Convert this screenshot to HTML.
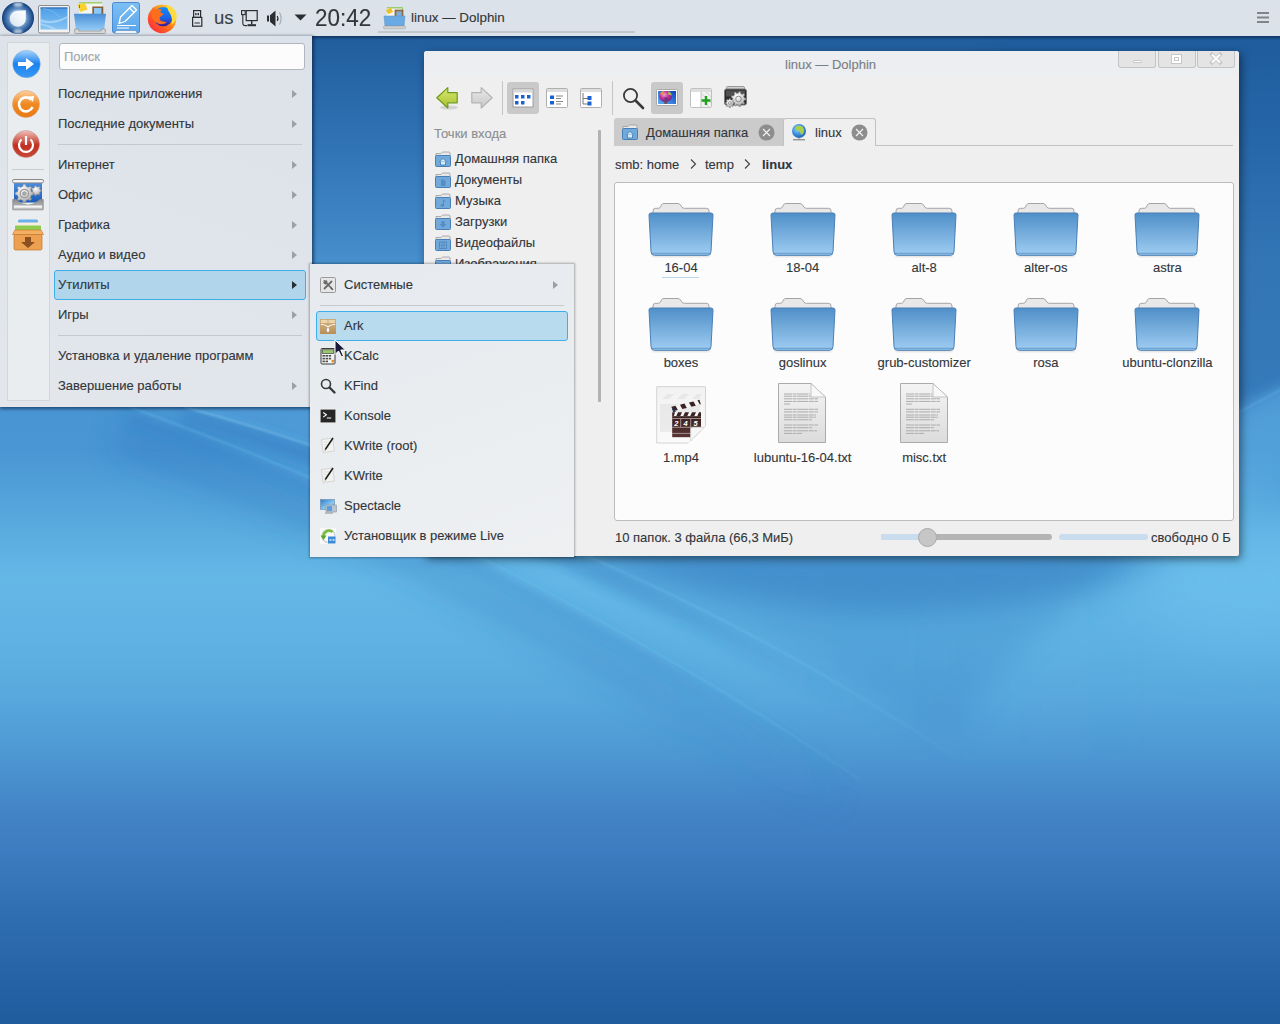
<!DOCTYPE html>
<html><head><meta charset="utf-8">
<style>
*{box-sizing:border-box;margin:0;padding:0}
html,body{width:1280px;height:1024px;overflow:hidden}
body{position:relative;font-family:"Liberation Sans",sans-serif;font-size:13px;color:#31363b;background:#2a6aab}
.a{position:absolute}
.t{position:absolute;white-space:nowrap;line-height:16px;-webkit-text-stroke:.12px currentColor}
.arr{position:absolute;width:0;height:0;border-top:4px solid transparent;border-bottom:4px solid transparent;border-left:5px solid #9aa0a6}
.sep{position:absolute;height:1px;background:#c3c8cd}
.hl{position:absolute;background:#b3d7ec;border:1px solid #3daee9;border-radius:3px}
svg.a{overflow:visible}
.lbl{position:absolute;width:120px;text-align:center;white-space:nowrap;line-height:16px;-webkit-text-stroke:.12px currentColor}
</style></head><body>
<svg width="0" height="0" style="position:absolute">
<defs>
<linearGradient id="fg" x1="0" y1="0" x2="0" y2="1">
<stop offset="0" stop-color="#4f8fc8"/><stop offset="1" stop-color="#9fcdf2"/>
</linearGradient>
<linearGradient id="pg" x1="0" y1="0" x2="0" y2="1">
<stop offset="0" stop-color="#f4f4f4"/><stop offset="1" stop-color="#dcdcdc"/>
</linearGradient>
<g id="folder">
<path d="M4 14 V7.8 Q4 5.3 6.5 5.3 H9.5 Q11 5.3 12 3 L12.5 1.8 Q13.2 0.5 15 0.5 H29 Q30.5 0.5 31.5 2 L33 4.2 Q33.8 5.3 35.5 5.3 H57.5 Q60 5.3 60 7.8 V14 Z" fill="#e8e8e8" stroke="#a4a4a4" stroke-width="1"/>
<rect x="3" y="50" width="58" height="4" rx="2" fill="#000" opacity=".12" filter="url(#bl1)"/>
<path d="M2 10 H62 Q64 10 64 12 L62 48.5 Q62 52.3 58.5 52.3 H5.5 Q2 52.3 2 48.5 L0 12 Q0 10 2 10 Z" fill="url(#fg)" stroke="#4a7fb5" stroke-width="1"/>
<path d="M3 50.5 H61" stroke="#6ea3d4" stroke-width="1.5"/>
</g>
<g id="txt">
<path d="M0.5 0.5 H33 L47.5 14 V59.5 H0.5 Z" fill="url(#pg)" stroke="#ababab"/>
<g stroke="#acacac" stroke-width="1" stroke-dasharray="8 .6 4 .6 11 .6 5 .6">
<path d="M6 11H32M6 13.2H34M6 15.8H40M6 18.4H40M6 21H12"/>
<path d="M6 26.3H40M6 28.9H40M6 32H38M6 34.2H38M6 36.8H34"/>
<path d="M6 42H40M6 44.7H34M6 47.8H39M6 50.4H24"/>
</g>
<path d="M33 0.5 V14 H47.5 Z" fill="#f8f8f8" stroke="#c4c4c4"/>
</g>
<g id="mp4">
<defs><linearGradient id="mpg" x1="0" y1="0" x2="0" y2="1"><stop offset="0" stop-color="#f2f2f2"/><stop offset="1" stop-color="#fafafa"/></linearGradient>
<linearGradient id="brd" x1="0" y1="0" x2="0" y2="1"><stop offset="0" stop-color="#3a2020"/><stop offset="1" stop-color="#5a3434"/></linearGradient></defs>
<path d="M0.7 0.7 H49.5 V40 L32.5 57 H0.7 Z" fill="url(#mpg)" stroke="#d4d4d4" stroke-width="1"/>
<g opacity=".07" fill="#555"><path d="M6 13L11 8H18L13 13ZM21 13L26 8H33L28 13ZM36 13L41 8H46L43 13Z"/><rect x="4" y="18" width="40" height="28"/></g>
<path d="M15.5 20.8 L43.5 13.8 L44.8 18.2 L16.6 25.4 Z" fill="#f4f4f4"/>
<path d="M15.5 20.8L19.5 19.8L21.8 24.1L17.3 25.2ZM24 18.7L28.5 17.6L30.8 21.9L26.3 23ZM33 16.5L37.5 15.4L39.8 19.7L35.3 20.8ZM41.5 14.3L43.5 13.8L44.8 18.2L43.8 18.4Z" fill="#3a2222"/>
<path d="M15.5 20.8 L17 26 L20 26" fill="#2a3a5a"/>
<rect x="16.2" y="26.2" width="28.8" height="4" fill="#f4f4f4"/>
<path d="M16.2 26.2H19L17.8 30.2H16.2ZM22 26.2H26L24.2 30.2H20.2ZM29 26.2H33L31.2 30.2H27.2ZM36 26.2H40L38.2 30.2H34.2ZM43 26.2H45V30.2H41.2Z" fill="#3a2222"/>
<rect x="16.2" y="30.2" width="28.8" height="21" fill="url(#brd)"/>
<path d="M16.2 32.5H45M16.2 41.3H45M16.2 47.4H45M24.7 32.5V41.3M34.7 32.5V51.3" stroke="#b8a8a8" stroke-width=".8"/>
<text x="18.2" y="39.8" font-size="7.5" fill="#fff" font-family="Liberation Sans" font-weight="bold" font-style="italic">2</text>
<text x="27.6" y="39.8" font-size="7.5" fill="#fff" font-family="Liberation Sans" font-weight="bold" font-style="italic">4</text>
<text x="37.6" y="39.8" font-size="7.5" fill="#fff" font-family="Liberation Sans" font-weight="bold" font-style="italic">5</text>
<path d="M49.8 39.7 L32.2 57.3 H50 Z" fill="#fcfcfc"/><path d="M34.7 55 V43.3 Q34.7 41.3 36.7 41.3 H48.4 Z" fill="#f6f6f6" stroke="#d0d0d0" stroke-width=".7"/>
</g>
<g id="hfold">
<path d="M1 2.5 H6 L7.5 1 H14 Q15 1 15 2 V5 H1 Z" fill="#e8e8e8" stroke="#9a9a9a" stroke-width=".8"/>
<rect x="0.5" y="4.5" width="15" height="11" rx="1" fill="#72a9db" stroke="#4a7fb5"/>
</g>
</defs>
</svg>

<!-- WALLPAPER -->
<svg id="wall" class="a" style="left:0;top:0" width="1280" height="1024">
<defs>
<linearGradient id="wg" gradientUnits="userSpaceOnUse" x1="0" y1="0" x2="0" y2="1024">
<stop offset="0" stop-color="#1c5696"/>
<stop offset="0.039" stop-color="#215e9e"/>
<stop offset="0.146" stop-color="#3174b6"/>
<stop offset="0.254" stop-color="#468ecc"/>
<stop offset="0.44" stop-color="#4a96d4"/>
<stop offset="0.566" stop-color="#64b8e6"/>
<stop offset="0.635" stop-color="#5eb0e2"/>
<stop offset="0.684" stop-color="#58a7dd"/>
<stop offset="0.742" stop-color="#4c96d2"/>
<stop offset="0.791" stop-color="#4384c6"/>
<stop offset="0.85" stop-color="#3a78bc"/>
<stop offset="0.898" stop-color="#2f6db1"/>
<stop offset="0.947" stop-color="#2764a7"/>
<stop offset="1" stop-color="#1f5c9e"/>
</linearGradient>
<linearGradient id="fadeR" gradientUnits="userSpaceOnUse" x1="100" y1="0" x2="980" y2="0">
<stop offset="0" stop-color="#8ad0f6" stop-opacity=".7"/>
<stop offset=".7" stop-color="#8ad0f6" stop-opacity=".5"/>
<stop offset="1" stop-color="#8ad0f6" stop-opacity="0"/>
</linearGradient>
<linearGradient id="fadeR2" gradientUnits="userSpaceOnUse" x1="100" y1="0" x2="900" y2="0">
<stop offset="0" stop-color="#62b2e6" stop-opacity=".5"/>
<stop offset=".7" stop-color="#62b2e6" stop-opacity=".35"/>
<stop offset="1" stop-color="#62b2e6" stop-opacity="0"/>
</linearGradient>
<linearGradient id="fadeD" gradientUnits="userSpaceOnUse" x1="100" y1="0" x2="860" y2="0">
<stop offset="0" stop-color="#2a72ba" stop-opacity=".4"/>
<stop offset=".7" stop-color="#2a72ba" stop-opacity=".3"/>
<stop offset="1" stop-color="#3580c4" stop-opacity="0"/>
</linearGradient>
<linearGradient id="fadeL" gradientUnits="userSpaceOnUse" x1="0" y1="0" x2="1280" y2="0">
<stop offset="0" stop-color="#62b2e6" stop-opacity=".22"/>
<stop offset=".5" stop-color="#62b2e6" stop-opacity=".12"/>
<stop offset=".9" stop-color="#62b2e6" stop-opacity="0"/>
</linearGradient>
<linearGradient id="fadeDk" gradientUnits="userSpaceOnUse" x1="0" y1="0" x2="1280" y2="0">
<stop offset="0" stop-color="#2f78c0" stop-opacity=".3"/>
<stop offset=".72" stop-color="#2f78c0" stop-opacity=".3"/>
<stop offset=".95" stop-color="#2f78c0" stop-opacity="0"/>
</linearGradient>
<filter id="bl8" x="-20%" y="-20%" width="140%" height="140%"><feGaussianBlur stdDeviation="6"/></filter>
<filter id="bl30" x="-50%" y="-50%" width="200%" height="200%"><feGaussianBlur stdDeviation="30"/></filter>
<filter id="bl15" x="-50%" y="-50%" width="200%" height="200%"><feGaussianBlur stdDeviation="15"/></filter>
<filter id="bl1"><feGaussianBlur stdDeviation="0.8"/></filter>
</defs>
<rect width="1280" height="1024" fill="url(#wg)"/>
<!-- lighter region top-right of upper line -->
<path d="M185 407 Q380 460 590 557 Q780 640 960 760 L1300 760 L1300 300 L185 300 Z" fill="url(#fadeL)" filter="url(#bl8)"/>
<!-- soft shadows below streak lines -->
<path d="M118 436 Q318 509 468 586 Q688 699 848 809" stroke="url(#fadeD)" stroke-width="40" fill="none" opacity=".8" filter="url(#bl15)"/>
<path d="M127 417 Q327 490 477 567 Q697 680 857 790" stroke="url(#fadeD)" stroke-width="10" fill="none" opacity=".7" filter="url(#bl8)"/>
<path d="M181 418 Q376 471 586 568 Q776 651 956 771" stroke="url(#fadeD)" stroke-width="18" fill="none" filter="url(#bl8)"/>
<!-- light edges -->
<path d="M187 404 Q382 457 592 554 Q782 637 962 757" stroke="url(#fadeR2)" stroke-width="4" fill="none" opacity=".5" filter="url(#bl1)"/>
<path d="M134 401 Q334 474 484 551 Q704 664 864 774" stroke="url(#fadeR2)" stroke-width="10" fill="none" opacity=".35" filter="url(#bl8)"/>
<path d="M185 407 Q380 460 590 557 Q780 640 960 760" stroke="url(#fadeR)" stroke-width="1.5" fill="none" filter="url(#bl1)"/>
<path d="M130 407 Q330 480 480 557 Q700 670 860 780" stroke="url(#fadeR)" stroke-width="1.5" fill="none" opacity=".55" filter="url(#bl1)"/>
<!-- dark wedge right of upper streak below dolphin -->
<path d="M588 557 Q780 640 950 740 Q1000 650 1160 540 L588 540 Z" fill="#2f74bc" opacity=".22" filter="url(#bl15)"/>
<!-- dark smile under dolphin -->
<path d="M586 548 Q640 590 860 612 Q1060 612 1180 556 L1180 548 Z" fill="#2f74bc" opacity=".5" filter="url(#bl15)"/>
<!-- right side dark above rising curve -->
<path d="M1000 36 L1300 36 L1300 378 Q1240 402 1150 462 Q1080 510 1000 530 L800 300 Z" fill="#1f5a9c" opacity=".45" filter="url(#bl8)"/>
<path d="M1130 486 Q1220 426 1300 388 L1300 470 Q1200 520 1130 560Z" fill="#6cc0ec" opacity=".25" filter="url(#bl15)"/>
<path d="M1130 480 Q1220 420 1300 380" stroke="#7cc4f0" stroke-width="1.5" fill="none" opacity=".32" filter="url(#bl1)"/>
<!-- bright right glow -->
<ellipse cx="1250" cy="580" rx="110" ry="60" fill="#6cc0ec" opacity=".75" filter="url(#bl30)"/>
</svg>



<!-- DOLPHIN -->
<div class="a" style="left:424px;top:51px;width:815px;height:505px;background:#efeff0;border-radius:3px 3px 2px 2px;box-shadow:2px 3px 8px rgba(0,0,0,.5)"></div>
<div class="a" style="left:424px;top:51px;width:815px;height:26px;background:linear-gradient(#eceef1,#eceef1 80%,#efeff0);border-radius:3px 3px 0 0"></div>
<div class="t" style="left:785px;top:57px;color:#7b7e82;font-size:13px">linux — Dolphin</div>
<div class="a" style="left:1118px;top:51px;width:38px;height:17px;background:#e4e4e4;border:1px solid #c4c4c4;border-top:none;border-radius:0 0 3px 3px"></div>
<div class="a" style="left:1158px;top:51px;width:38px;height:17px;background:#e4e4e4;border:1px solid #c4c4c4;border-top:none;border-radius:0 0 3px 3px"></div>
<div class="a" style="left:1197px;top:51px;width:38px;height:17px;background:#e4e4e4;border:1px solid #c4c4c4;border-top:none;border-radius:0 0 3px 3px"></div>
<div class="a" style="left:1133px;top:60px;width:9px;height:3px;border:1px solid #c8c8c8;background:#fff;border-radius:1px"></div>
<div class="a" style="left:1171px;top:54px;width:11px;height:10px;border:1px solid #c8c8c8;background:#fff"></div>
<div class="a" style="left:1174px;top:57px;width:5px;height:4px;border:1px solid #c8c8c8"></div>
<svg class="a" style="left:1210px;top:53px" width="12" height="11"><path d="M2 1.5L10 9.5M10 1.5L2 9.5" stroke="#c8c8c8" stroke-width="4" stroke-linecap="square"/><path d="M2 1.5L10 9.5M10 1.5L2 9.5" stroke="#fff" stroke-width="2"/></svg>

<!-- toolbar -->
<svg class="a" style="left:436px;top:87px" width="24" height="24">
<defs><linearGradient id="bg1" x1="0" y1="0" x2="0" y2="1"><stop offset="0" stop-color="#d8e870"/><stop offset="1" stop-color="#a8c030"/></linearGradient></defs>
<ellipse cx="13" cy="20.5" rx="9" ry="2" fill="rgba(0,0,0,.12)"/>
<path d="M0.8 10.8 L11.8 0.6 V5.6 H21.2 V15.8 H11.8 V21 Z" fill="url(#bg1)" stroke="#6c9c1c" stroke-width="1.2" stroke-linejoin="round"/>
</svg>
<svg class="a" style="left:470px;top:87px" width="24" height="24">
<defs><linearGradient id="bg2" x1="0" y1="0" x2="0" y2="1"><stop offset="0" stop-color="#e8e8e8"/><stop offset="1" stop-color="#c8c8c8"/></linearGradient></defs>
<path d="M22.2 10.8 L11.2 0.6 V5.6 H1.8 V15.8 H11.2 V21 Z" fill="url(#bg2)" stroke="#b4b4b4" stroke-width="1.2" stroke-linejoin="round"/>
</svg>
<div class="a" style="left:502px;top:81px;width:1px;height:34px;background:#c4c4c4"></div>
<div class="a" style="left:507px;top:82px;width:32px;height:32px;background:#c9c9c9;border-radius:3px"></div>
<svg class="a" style="left:512px;top:88px" width="22" height="20">
<rect x="1" y="1" width="20" height="18" fill="#fff" stroke="#9c9c9c"/><rect x="1.5" y="1.5" width="19" height="3" fill="#d8d8d8"/>
<g fill="#1a62d0"><rect x="3" y="7" width="3.5" height="3.5"/><rect x="9" y="7" width="3.5" height="3.5"/><rect x="15" y="7" width="3.5" height="3.5"/><rect x="3" y="13" width="3.5" height="3.5"/><rect x="9" y="13" width="3.5" height="3.5"/></g>
</svg>
<svg class="a" style="left:546px;top:88px" width="22" height="20">
<rect x="0.5" y="0.5" width="21" height="19" rx="1" fill="#fff" stroke="#b0b0b0"/><rect x="1" y="1" width="20" height="3" fill="#dedede"/>
<g fill="#1a62d0"><rect x="4" y="7.5" width="4" height="3.5"/><rect x="4" y="13" width="4" height="3.5"/></g>
<g stroke="#888" stroke-width="1"><path d="M10 8H17M10 10.5H15M10 13.5H17M10 16H15"/></g>
</svg>
<svg class="a" style="left:580px;top:88px" width="22" height="20">
<rect x="0.5" y="0.5" width="21" height="19" rx="1" fill="#fff" stroke="#b0b0b0"/><rect x="1" y="1" width="20" height="3" fill="#dedede"/>
<path d="M3 5V16H8M3 10.5H8" stroke="#777" fill="none"/>
<g fill="#1a62d0"><rect x="7.5" y="8" width="4" height="4"/><rect x="7.5" y="13.5" width="4" height="4"/></g>
</svg>
<div class="a" style="left:612px;top:81px;width:1px;height:34px;background:#c4c4c4"></div>
<svg class="a" style="left:622px;top:87px" width="24" height="22">
<circle cx="8.5" cy="8.5" r="6.6" fill="none" stroke="#3a3a3a" stroke-width="1.8"/>
<path d="M13.5 13.5 L21 21" stroke="#3a3a3a" stroke-width="2.6" stroke-linecap="round"/>
</svg>
<div class="a" style="left:651px;top:82px;width:32px;height:32px;background:#c9c9c9;border-radius:3px"></div>
<svg class="a" style="left:656px;top:89px" width="22" height="17">
<defs><linearGradient id="sky" x1="1" y1="0" x2="0" y2="1"><stop offset="0" stop-color="#0a40c0"/><stop offset="1" stop-color="#60b0f4"/></linearGradient>
<radialGradient id="bal" cx=".4" cy=".35" r=".7"><stop offset="0" stop-color="#f0a0d0"/><stop offset=".5" stop-color="#c03090"/><stop offset="1" stop-color="#6a2a80"/></radialGradient></defs>
<rect x="0.5" y="0.5" width="21" height="16" rx="1" fill="#fff" stroke="#9a9a9a" stroke-width=".8"/>
<rect x="2" y="2" width="18" height="13" fill="url(#sky)"/>
<clipPath id="pvc"><rect x="2" y="2" width="18" height="13"/></clipPath><g clip-path="url(#pvc)">
<ellipse cx="9.6" cy="7.4" rx="6.4" ry="5.6" fill="url(#bal)"/>
<path d="M4 5 Q5 2 8 1.8 L7 6 Z" fill="#e8a030" opacity=".85"/>
<path d="M12.5 2 Q15.5 3.5 16 6.5 L12 5.5Z" fill="#a8d040" opacity=".85"/>
<path d="M8 9 L10 8 L12 10 L9.5 11.5Z" fill="#3a3a9a" opacity=".7"/>
<path d="M7.5 11.5 L9 14 H10.5 L12 11.5" stroke="#5a3a2a" stroke-width=".7" fill="none"/>
<rect x="8.6" y="13.5" width="2" height="2" fill="#7a4a2a"/>
</g></svg>
<svg class="a" style="left:690px;top:88px" width="22" height="20">
<defs><clipPath id="spl"><rect x="11" y="4" width="10" height="15"/></clipPath></defs>
<rect x="0.5" y="0.5" width="21" height="19" rx="1" fill="#fff" stroke="#c0c0c0"/><rect x="1" y="1" width="20" height="3" fill="#dedede"/>
<rect x="11" y="4" width="10" height="15" fill="#f2f2f2"/>
<g clip-path="url(#spl)" stroke="#dadada" stroke-width="1.2"><path d="M8 8L20 20M8 2L22 16M12 0L24 12M6 14L14 22"/></g>
<path d="M11 4V19" stroke="#c0c0c0"/>
<path d="M16 8V17M11.5 12.5H20.5" stroke="#20a020" stroke-width="2.4"/>
</svg>
<svg class="a" style="left:724px;top:86px" width="23" height="22">
<rect x="2.5" y="0.5" width="18" height="3.5" rx="1.2" fill="#d0d0d0" stroke="#7a7a7a" stroke-width=".7"/>
<rect x="0.5" y="3" width="22" height="16" rx="2" fill="#2a2a2a" stroke="#7a7a7a"/>
<rect x="2" y="4.5" width="19" height="6" fill="#6a6a6a" opacity=".6"/>
<path d="M20.04 10.98 L20.27 11.79 L22.06 12.19 L22.06 13.81 L20.27 14.21 L20.04 15.02 L19.70 15.78 L20.81 17.23 L19.77 18.48 L18.14 17.64 L17.45 18.11 L16.70 18.48 L16.61 20.30 L15.01 20.58 L14.31 18.90 L13.48 18.81 L12.66 18.61 L11.43 19.95 L10.02 19.14 L10.56 17.39 L9.98 16.79 L9.49 16.11 L7.68 16.35 L7.12 14.82 L8.66 13.83 L8.60 13.00 L8.66 12.17 L7.12 11.18 L7.68 9.65 L9.49 9.89 L9.98 9.21 L10.56 8.61 L10.02 6.86 L11.43 6.05 L12.66 7.39 L13.48 7.19 L14.31 7.10 L15.01 5.42 L16.61 5.70 L16.70 7.52 L17.45 7.89 L18.14 8.36 L19.77 7.52 L20.81 8.77 L19.70 10.22Z" fill="url(#gsg)" stroke="#6a6a6a" stroke-width=".5"/>
<circle cx="14.5" cy="13" r="2.8" fill="none" stroke="#8a8a8a" stroke-width="1"/>
<path d="M8.94 15.70 L9.11 16.24 L10.36 16.42 L10.36 17.58 L9.11 17.76 L8.94 18.30 L8.68 18.80 L9.44 19.82 L8.62 20.64 L7.60 19.88 L7.10 20.14 L6.56 20.31 L6.38 21.56 L5.22 21.56 L5.04 20.31 L4.50 20.14 L4.00 19.88 L2.98 20.64 L2.16 19.82 L2.92 18.80 L2.66 18.30 L2.49 17.76 L1.24 17.58 L1.24 16.42 L2.49 16.24 L2.66 15.70 L2.92 15.20 L2.16 14.18 L2.98 13.36 L4.00 14.12 L4.50 13.86 L5.04 13.69 L5.22 12.44 L6.38 12.44 L6.56 13.69 L7.10 13.86 L7.60 14.12 L8.62 13.36 L9.44 14.18 L8.68 15.20Z" fill="url(#gsg)" stroke="#6a6a6a" stroke-width=".5"/>
<circle cx="5.8" cy="17" r="1.4" fill="none" stroke="#8a8a8a" stroke-width=".8"/>
</svg>

<!-- places -->
<div class="t" style="left:434px;top:126px;color:#8c8e90">Точки входа</div>
<div class="a" style="left:598px;top:130px;width:3px;height:272px;background:#b2b2b2;border-radius:1px"></div>
<svg class="a" style="left:435px;top:151px" width="16" height="16"><use href="#hfold"/><path d="M4 11L8 7.5L12 11M5.5 10.5V14H10.5V10.5" fill="#d8ecfa" stroke="#3f78b0" stroke-width=".8"/></svg>
<div class="t" style="left:455px;top:151px">Домашняя папка</div>
<svg class="a" style="left:435px;top:172px" width="16" height="16"><use href="#hfold"/><path d="M6 7.5H9L10.5 9V14H6Z" fill="#3f78b0" opacity=".55"/></svg>
<div class="t" style="left:455px;top:172px">Документы</div>
<svg class="a" style="left:435px;top:193px" width="16" height="16"><use href="#hfold"/><path d="M8.5 7V12.5M8.5 7L10.5 8.5" stroke="#3f78b0" fill="none" opacity=".6"/><circle cx="7.3" cy="12.5" r="1.4" fill="#3f78b0" opacity=".6"/></svg>
<div class="t" style="left:455px;top:193px">Музыка</div>
<svg class="a" style="left:435px;top:214px" width="16" height="16"><use href="#hfold"/><path d="M6.5 7H9.5V10H11.5L8 13.5L4.5 10H6.5Z" fill="#3f78b0" opacity=".6"/></svg>
<div class="t" style="left:455px;top:214px">Загрузки</div>
<svg class="a" style="left:435px;top:235px" width="16" height="16"><use href="#hfold"/><rect x="4.5" y="7" width="7" height="6.5" fill="none" stroke="#3f78b0" opacity=".6"/><path d="M7 7V13.5M9 7V13.5M4.5 10.2H11.5" stroke="#3f78b0" opacity=".5"/></svg>
<div class="t" style="left:455px;top:235px">Видеофайлы</div>
<svg class="a" style="left:435px;top:256px" width="16" height="16"><use href="#hfold"/></svg>
<div class="t" style="left:455px;top:256px">Изображения</div>

<!-- tabs -->
<div class="a" style="left:614px;top:118px;width:170px;height:28px;background:#cbcbcb;border-radius:3px 0 0 0"></div>
<svg class="a" style="left:622px;top:124px" width="16" height="16"><use href="#hfold"/><path d="M4 11L8 7.5L12 11M5.5 10.5V14H10.5V10.5" fill="#d8ecfa" stroke="#3f78b0" stroke-width=".8"/></svg>
<div class="t" style="left:646px;top:125px">Домашняя папка</div>
<svg class="a" style="left:758px;top:124px" width="17" height="17"><circle cx="8.5" cy="8.5" r="8" fill="#8d8d8d"/><path d="M5 5L12 12M12 5L5 12" stroke="#f4f4f4" stroke-width="1.1"/></svg>
<div class="a" style="left:783px;top:118px;width:93px;height:28px;background:#efeff0;border:1px solid #c2c2c2;border-bottom:none;border-radius:3px 3px 0 0"></div>
<div class="a" style="left:875px;top:145px;width:358px;height:1px;background:#c2c2c2"></div>
<svg class="a" style="left:791px;top:123px" width="16" height="18">
<defs><radialGradient id="glb" cx=".4" cy=".35" r=".7"><stop offset="0" stop-color="#9ad4f8"/><stop offset=".6" stop-color="#3a8ad8"/><stop offset="1" stop-color="#2060b0"/></radialGradient></defs>
<circle cx="8" cy="8" r="7" fill="url(#glb)"/>
<path d="M5 3.5 Q9 2 12 4 Q14 7 12.5 10 Q11 12.5 9.5 11 Q10 8.5 8 8 Q5.5 8 5 6Z" fill="#a8d048"/>
<path d="M2 16.8H14" stroke="#707070" stroke-width="1"/><path d="M8 15V16.5" stroke="#909090"/>
</svg>
<div class="t" style="left:815px;top:125px">linux</div>
<svg class="a" style="left:851px;top:124px" width="17" height="17"><circle cx="8.5" cy="8.5" r="8" fill="#8d8d8d"/><path d="M5 5L12 12M12 5L5 12" stroke="#f4f4f4" stroke-width="1.1"/></svg>

<!-- breadcrumb -->
<div class="t" style="left:615px;top:157px">smb: home</div>
<svg class="a" style="left:689px;top:158px" width="8" height="12"><path d="M2 1.5L6.5 6L2 10.5" stroke="#404040" fill="none" stroke-width="1.1"/></svg>
<div class="t" style="left:705px;top:157px">temp</div>
<svg class="a" style="left:743px;top:158px" width="8" height="12"><path d="M2 1.5L6.5 6L2 10.5" stroke="#404040" fill="none" stroke-width="1.1"/></svg>
<div class="t" style="left:762px;top:157px;font-weight:bold">linux</div>

<!-- view -->
<div class="a" style="left:614px;top:182px;width:620px;height:339px;background:#fcfcfc;border:1px solid #bcbcbc;border-radius:3px"></div>
<svg class="a" style="left:649px;top:203px" width="64" height="54"><use href="#folder"/></svg>
<div class="lbl" style="left:621.0px;top:260px">16-04</div>
<svg class="a" style="left:771px;top:203px" width="64" height="54"><use href="#folder"/></svg>
<div class="lbl" style="left:742.6px;top:260px">18-04</div>
<svg class="a" style="left:892px;top:203px" width="64" height="54"><use href="#folder"/></svg>
<div class="lbl" style="left:864.2px;top:260px">alt-8</div>
<svg class="a" style="left:1014px;top:203px" width="64" height="54"><use href="#folder"/></svg>
<div class="lbl" style="left:985.8px;top:260px">alter-os</div>
<svg class="a" style="left:1135px;top:203px" width="64" height="54"><use href="#folder"/></svg>
<div class="lbl" style="left:1107.4px;top:260px">astra</div>
<svg class="a" style="left:649px;top:298px" width="64" height="54"><use href="#folder"/></svg>
<div class="lbl" style="left:621.0px;top:355px">boxes</div>
<svg class="a" style="left:771px;top:298px" width="64" height="54"><use href="#folder"/></svg>
<div class="lbl" style="left:742.6px;top:355px">goslinux</div>
<svg class="a" style="left:892px;top:298px" width="64" height="54"><use href="#folder"/></svg>
<div class="lbl" style="left:864.2px;top:355px">grub-customizer</div>
<svg class="a" style="left:1014px;top:298px" width="64" height="54"><use href="#folder"/></svg>
<div class="lbl" style="left:985.8px;top:355px">rosa</div>
<svg class="a" style="left:1135px;top:298px" width="64" height="54"><use href="#folder"/></svg>
<div class="lbl" style="left:1107.4px;top:355px">ubuntu-clonzilla</div>
<svg class="a" style="left:656px;top:386px" width="51" height="58"><use href="#mp4"/></svg>
<div class="lbl" style="left:621.0px;top:450px">1.mp4</div>
<svg class="a" style="left:778px;top:383px" width="48" height="60"><use href="#txt"/></svg>
<div class="lbl" style="left:742.6px;top:450px">lubuntu-16-04.txt</div>
<svg class="a" style="left:900px;top:383px" width="48" height="60"><use href="#txt"/></svg>
<div class="lbl" style="left:864.2px;top:450px">misc.txt</div>
<div class="a" style="left:662px;top:277px;width:37px;height:1px;background:#b8d6ee"></div>
<!-- status -->
<div class="t" style="left:615px;top:530px">10 папок. 3 файла (66,3 МиБ)</div>
<div class="a" style="left:881px;top:534px;width:171px;height:6px;background:#b4b4b4;border-radius:3px"></div>
<div class="a" style="left:881px;top:534px;width:48px;height:6px;background:#c9ddef;border-radius:3px 0 0 3px"></div>
<div class="a" style="left:918px;top:528px;width:19px;height:19px;background:#c6c6c6;border:1px solid #a9a9a9;border-radius:50%"></div>
<div class="a" style="left:1059px;top:534px;width:89px;height:6px;background:#c9ddef;border-radius:3px"></div>
<div class="t" style="left:1151px;top:530px">свободно 0 Б</div>

<!-- PANEL -->
<div class="a" style="left:0;top:36px;width:1280px;height:4px;background:linear-gradient(rgba(5,25,60,.6),rgba(5,25,60,0))"></div>
<div class="a" style="left:0;top:0;width:1280px;height:36px;background:#dce2e9"></div>
<svg class="a" style="left:0;top:0" width="36" height="36">
<defs>
<radialGradient id="ring" cx=".5" cy=".5" r=".5"><stop offset=".45" stop-color="#9cbce0"/><stop offset=".62" stop-color="#5a88bc"/><stop offset=".85" stop-color="#2a5a96"/><stop offset="1" stop-color="#123c78"/></radialGradient>
<linearGradient id="drop" x1="1" y1="0" x2="0" y2="1"><stop offset="0" stop-color="#ffffff"/><stop offset=".5" stop-color="#eef4fa"/><stop offset="1" stop-color="#d4e0ee"/></linearGradient>
<filter id="sb"><feGaussianBlur stdDeviation="1"/></filter>
</defs>
<circle cx="18" cy="18" r="16" fill="url(#ring)"/>
<ellipse cx="18" cy="4.5" rx="4.5" ry="2.2" fill="#e8f0f8" opacity=".75" filter="url(#sb)"/>
<ellipse cx="18" cy="31.5" rx="4.5" ry="2.2" fill="#e8f0f8" opacity=".7" filter="url(#sb)"/>
<path d="M25.8 10.2 V18.7 A8 8 0 1 1 17.8 10.7 Z" fill="url(#drop)"/>
</svg>
<svg class="a" style="left:38px;top:5px" width="32" height="29">
<defs><linearGradient id="scr" x1="0" y1="0" x2="0" y2="1"><stop offset="0" stop-color="#4a9ce6"/><stop offset="1" stop-color="#86c4f4"/></linearGradient></defs>
<rect x="0.5" y="0.5" width="31" height="27.5" rx="1.5" fill="#f2f2f2" stroke="#8c8c8c"/>
<rect x="2.5" y="2.5" width="27" height="22" fill="url(#scr)"/>
<rect x="2.5" y="2.5" width="27" height="1" fill="#2a64a8"/>
<path d="M2.5 14 Q14 19 29.5 11 V13 Q16 21 2.5 17Z" fill="#bfe2fa" opacity=".6"/>
<path d="M2.5 18 Q12 20 20 24.5 H15 Q9 21 2.5 20Z" fill="#bfe2fa" opacity=".55"/>
<path d="M5 3.5 Q15 5 22 12" stroke="#8cc4f0" stroke-width="1" fill="none" opacity=".6"/>
</svg>
<svg class="a" style="left:74px;top:2px" width="32" height="32">
<defs><linearGradient id="pf" x1="0" y1="0" x2="0" y2="1"><stop offset="0" stop-color="#4a8ed6"/><stop offset="1" stop-color="#94ccf8"/></linearGradient></defs>
<rect x="5" y="0" width="23" height="2" fill="#a4d070"/>
<rect x="5" y="1.6" width="23" height="10" fill="#f4f4f2"/>
<path d="M3.5 2.5 L11 1 L13.5 7.5 L6 10Z" fill="#f8d030"/>
<path d="M5.5 3V6" stroke="#4a7ab0" stroke-width="1"/>
<rect x="18.3" y="4.5" width="11" height="8" fill="#8a5e36"/>
<rect x="20" y="6" width="7.4" height="6.5" fill="#8cc8f4"/>
<path d="M0 11.7 H32 L30 28.5 H2 Z" fill="url(#pf)"/>
<path d="M0.8 27 H4.8 V29 H27.2 V27 H31.2 L31.5 30.5 Q31.5 31.5 30.5 31.5 H1.5 Q0.5 31.5 0.5 30.5 Z" fill="#d8d8d8" stroke="#8e8e8e" stroke-width=".7"/>
</svg>
<svg class="a" style="left:112px;top:2px" width="28" height="32">
<defs><linearGradient id="kw" x1="0" y1="0" x2="0" y2="1"><stop offset="0" stop-color="#7cc0f4"/><stop offset="1" stop-color="#5aa4e8"/></linearGradient></defs>
<rect x="0.5" y="0.5" width="27" height="30.5" rx="2" fill="url(#kw)" stroke="#4a8ad0"/>
<path d="M20 3.5 L24.5 8 L13 19.5 L7 21.5 L8.5 15Z" fill="none" stroke="#fff" stroke-width="1.3" stroke-linejoin="round"/>
<path d="M17.5 6 L22 10.5" stroke="#fff" stroke-width="1.2"/>
<path d="M7 21.5 L9 20.5 L8 19.5Z" fill="#fff"/>
<path d="M5 23.5H24M5 26H17" stroke="#fff" stroke-width="1.1"/>
<path d="M3 31 Q3 28.5 5 28.5 H23 Q25 28.5 25 31" fill="#f4f4f4" stroke="#4a8ad0" stroke-width=".6"/>
</svg>
<svg class="a" style="left:146px;top:2px" width="32" height="32">
<defs>
<linearGradient id="ffo" x1="0" y1="1" x2="1" y2="0"><stop offset="0" stop-color="#ff1a4a"/><stop offset=".45" stop-color="#ff6a1a"/><stop offset=".8" stop-color="#ffc020"/><stop offset="1" stop-color="#ffe84a"/></linearGradient>
<linearGradient id="ffb" x1="0" y1="0" x2="0" y2="1"><stop offset="0" stop-color="#0a90ff"/><stop offset=".6" stop-color="#2060e0"/><stop offset="1" stop-color="#3a1a90"/></linearGradient>
</defs>
<circle cx="16" cy="17" r="14.2" fill="url(#ffo)"/>
<circle cx="17.2" cy="14.6" r="9.6" fill="url(#ffb)"/>
<path d="M7 5 L8.6 8.2 Q11.2 6.8 15.6 7.2 L14.2 10 Q16.6 11.4 17.6 12.6 Q14 14 13.4 16.6 Q14 19.2 17 19.6 Q19.2 19.8 20.8 20.6 Q17 23 12.6 21.8 Q5.8 19.2 5.4 12 Q5.4 7.6 7 5Z" fill="#ff6e1e"/>
<path d="M20.6 2.2 Q21.4 8 24 11.6 Q26.8 16 25.6 23 Q30.4 19.4 30.8 14 Q30.6 6.4 20.6 2.2Z" fill="#ffdc3c"/>
</svg>
<svg class="a" style="left:192px;top:10px" width="11" height="17">
<rect x="1.6" y="0.6" width="7" height="6.8" fill="none" stroke="#2a2e33" stroke-width="1.2"/>
<rect x="3.2" y="3" width="1.4" height="2.2" fill="#2a2e33"/><rect x="5.6" y="3" width="1.4" height="2.2" fill="#2a2e33"/>
<rect x="0.6" y="7.4" width="9.2" height="8.8" fill="none" stroke="#2a2e33" stroke-width="1.2"/>
<path d="M2.5 13H7.8" stroke="#2a2e33" stroke-width="1"/>
</svg>
<div class="t" style="left:214px;top:8px;font-size:18.5px;line-height:20px;color:#3a3f44">us</div>
<svg class="a" style="left:241px;top:10px" width="17" height="17">
<rect x="0.6" y="0.6" width="3.6" height="4" fill="none" stroke="#2a2e33" stroke-width="1.1"/>
<path d="M1.8 4.6 V13.2 Q1.8 15.6 4.5 15.6 H6" stroke="#2a2e33" fill="none" stroke-width="1.1"/>
<rect x="5.2" y="0.6" width="11" height="10" fill="none" stroke="#2a2e33" stroke-width="1.2"/>
<path d="M10.7 11V14.5" stroke="#2a2e33" stroke-width="1.4"/>
<rect x="6.5" y="14.2" width="8.5" height="2" fill="#2a2e33"/>
</svg>
<svg class="a" style="left:267px;top:10px" width="17" height="17">
<rect x="0" y="5.5" width="2" height="6" fill="#2a2e33"/>
<path d="M3 5.2 L8.5 0.5 V16.5 L3 11.8Z" fill="#2a2e33"/>
<path d="M10.3 6 Q11.6 8.5 10.3 11" stroke="#2a2e33" fill="none" stroke-width="1.2"/>
<path d="M12.5 2.5 Q15.8 8.5 12.5 14.5" stroke="#9a9ea2" fill="none" stroke-width="1"/>
</svg>
<svg class="a" style="left:294px;top:14px" width="13" height="7"><path d="M0.5 0.5H12.5L6.5 6.5Z" fill="#2a2e33"/></svg>
<div class="t" style="left:315px;top:5px;font-size:24px;line-height:26px;color:#31363b;transform:scaleX(.935);transform-origin:0 0">20:42</div>
<svg class="a" style="left:383px;top:7px" width="23" height="22">
<rect x="4" y="0" width="16" height="8" fill="#9ccc70"/>
<rect x="4" y="1.5" width="15" height="9" fill="#f6f4ec"/>
<path d="M3 3 L8 1 L10 5 L5 7Z" fill="#f0c020"/>
<rect x="12" y="3" width="8" height="9" fill="#a07850" stroke="#6a4a30" stroke-width=".6"/>
<rect x="13.5" y="4.5" width="5" height="6" fill="#7ab0e0"/>
<path d="M1 9 H22 L21 19 H2Z" fill="#6aaae4" stroke="#5a8cc0" stroke-width=".5"/>
<rect x="0.5" y="19" width="22" height="2.8" rx="1" fill="#d0d0d0" stroke="#9a9a9a" stroke-width=".5"/>
</svg>
<div class="t" style="left:411px;top:10px;font-size:13.4px;color:#31363b">linux — Dolphin</div>
<div class="a" style="left:378px;top:31px;width:257px;height:2px;background:#c2c7cd"></div>
<svg class="a" style="left:1257px;top:12px" width="12" height="12"><path d="M0 1H12M0 5.5H12M0 10H12" stroke="#7f8489" stroke-width="2"/></svg>

<!-- MENU -->
<div class="a" style="left:0;top:36px;width:312px;height:371px;background:linear-gradient(200deg,#dce2e9,#e3e7ec);box-shadow:1px 1px 3px 1px rgba(0,20,50,.55)"></div>
<div class="a" style="left:7px;top:42px;width:43px;height:359px;background:#e9edf0;border:1px solid #d2d7dc"></div>
<div class="a" style="left:59px;top:43px;width:246px;height:27px;background:#fcfcfc;border:1px solid #b0b6bc;border-radius:3px"></div>
<div class="t" style="left:64px;top:49px;color:#a0a6ab">Поиск</div>
<svg class="a" style="left:12px;top:50px" width="29" height="29">
<defs><linearGradient id="gblue" x1="0" y1="0" x2="0" y2="1"><stop offset="0" stop-color="#a8d4fc"/><stop offset=".5" stop-color="#1a82f0"/><stop offset="1" stop-color="#3a9af4"/></linearGradient></defs>
<circle cx="14.5" cy="14" r="13.8" fill="url(#gblue)" stroke="#8ab0d0" stroke-width=".5"/>
<path d="M6 12H14V8L22 14L14 20V16H6Z" fill="#fff"/>
</svg>
<svg class="a" style="left:12px;top:90px" width="29" height="29">
<defs><linearGradient id="gorg" x1="0" y1="0" x2="0" y2="1"><stop offset="0" stop-color="#fcd0a0"/><stop offset=".5" stop-color="#f08a20"/><stop offset="1" stop-color="#e87a18"/></linearGradient></defs>
<circle cx="14" cy="14" r="13.5" fill="url(#gorg)" stroke="#d8a070" stroke-width=".5"/>
<path d="M19.5 10 A7 7 0 1 0 20.5 17" fill="none" stroke="#fff" stroke-width="2.6"/>
<path d="M16 6.5L22 6L21 12Z" fill="#fff"/>
</svg>
<svg class="a" style="left:12px;top:130px" width="28" height="28">
<defs><linearGradient id="gred" x1="0" y1="0" x2="0" y2="1"><stop offset="0" stop-color="#f0c0b8"/><stop offset=".55" stop-color="#c03020"/><stop offset="1" stop-color="#c84838"/></linearGradient></defs>
<circle cx="14" cy="14" r="13.5" fill="url(#gred)" stroke="#c09088" stroke-width=".5"/>
<path d="M9.5 9.5 A7 7 0 1 0 18.5 9.5" fill="none" stroke="#fff" stroke-width="2.2"/>
<path d="M14 6V15" stroke="#fff" stroke-width="2.2"/>
</svg>
<div class="a" style="left:12px;top:169px;width:32px;height:1px;background:#c8cdd2"></div>
<svg class="a" style="left:12px;top:179px" width="32" height="32">
<defs><linearGradient id="gsb" x1="0" y1="0" x2="0" y2="1"><stop offset="0" stop-color="#4a90e0"/><stop offset="1" stop-color="#1a5ab8"/></linearGradient>
<radialGradient id="gsg" cx=".4" cy=".3" r=".8"><stop offset="0" stop-color="#ffffff"/><stop offset=".6" stop-color="#c8c8c8"/><stop offset="1" stop-color="#8a8a8a"/></radialGradient>
<linearGradient id="gst" x1="0" y1="0" x2="0" y2="1"><stop offset="0" stop-color="#8c8c8c"/><stop offset="1" stop-color="#c8c8c8"/></linearGradient></defs>
<rect x="2" y="3.5" width="28" height="20" fill="url(#gsb)"/>
<path d="M27.82 10.05 L28.08 10.75 L29.34 10.94 L29.34 12.46 L28.08 12.65 L27.82 13.35 L27.44 13.99 L28.07 15.09 L26.89 16.04 L25.95 15.17 L25.25 15.40 L24.50 15.50 L24.04 16.69 L22.56 16.35 L22.66 15.08 L22.03 14.67 L21.50 14.15 L20.28 14.53 L19.62 13.16 L20.67 12.44 L20.60 11.70 L20.67 10.96 L19.62 10.24 L20.28 8.87 L21.50 9.25 L22.03 8.73 L22.66 8.32 L22.56 7.05 L24.04 6.71 L24.50 7.90 L25.25 8.00 L25.95 8.23 L26.89 7.36 L28.07 8.31 L27.44 9.41Z" fill="url(#gsg)" stroke="#8a8a8a" stroke-width=".5"/>
<path d="M19.05 11.74 L19.42 12.88 L21.53 13.34 L21.53 15.66 L19.42 16.12 L19.05 17.26 L18.51 18.32 L19.68 20.13 L18.03 21.78 L16.22 20.61 L15.16 21.15 L14.02 21.52 L13.56 23.63 L11.24 23.63 L10.78 21.52 L9.64 21.15 L8.58 20.61 L6.77 21.78 L5.12 20.13 L6.29 18.32 L5.75 17.26 L5.38 16.12 L3.27 15.66 L3.27 13.34 L5.38 12.88 L5.75 11.74 L6.29 10.68 L5.12 8.87 L6.77 7.22 L8.58 8.39 L9.64 7.85 L10.78 7.48 L11.24 5.37 L13.56 5.37 L14.02 7.48 L15.16 7.85 L16.22 8.39 L18.03 7.22 L19.68 8.87 L18.51 10.68Z" fill="url(#gsg)" stroke="#8a8a8a" stroke-width=".5"/>
<circle cx="12.4" cy="14.5" r="4.2" fill="none" stroke="#9a9a9a" stroke-width="1.2"/>
<circle cx="12.4" cy="14.5" r="1.8" fill="#b0b0b0" stroke="#7a7a7a" stroke-width=".6"/>
<rect x="0.5" y="0.5" width="31" height="3.4" rx="1.5" fill="#f4f4f4" stroke="#8a8a8a"/>
<path d="M0.8 20.5 H4 Q16 32 28 20.5 H31.2 V30.8 H0.8 Z" fill="url(#gst)" stroke="#8a8a8a" stroke-width=".8"/>
<rect x="2" y="26.5" width="28" height="2.2" fill="#f6f6f6"/>
</svg>
<svg class="a" style="left:12px;top:219px" width="32" height="32">
<rect x="6" y="0.5" width="20" height="4" rx="1.5" fill="#6ab0ec"/>
<rect x="4.5" y="3.5" width="23" height="4" rx="1" fill="#fbeee0"/>
<rect x="3" y="6.5" width="26" height="5" rx="1" fill="#8ccc50"/>
<path d="M3 11H29L31.5 15.5H0.5Z" fill="#f4b060" stroke="#c87a30" stroke-width=".7"/>
<rect x="2" y="15.5" width="28" height="15.5" rx="1.5" fill="#eca050" stroke="#c07830" stroke-width=".7"/>
<path d="M13 18H19V23H23L16 29L9 23H13Z" fill="#8a5020"/>
</svg>

<div class="t" style="left:58px;top:86px">Последние приложения</div>
<div class="arr" style="left:292px;top:90px"></div>
<div class="t" style="left:58px;top:116px">Последние документы</div>
<div class="arr" style="left:292px;top:120px"></div>
<div class="sep" style="left:58px;top:144px;width:244px;background:#c4c9ce"></div>
<div class="t" style="left:58px;top:157px">Интернет</div>
<div class="arr" style="left:292px;top:161px"></div>
<div class="t" style="left:58px;top:187px">Офис</div>
<div class="arr" style="left:292px;top:191px"></div>
<div class="t" style="left:58px;top:217px">Графика</div>
<div class="arr" style="left:292px;top:221px"></div>
<div class="t" style="left:58px;top:247px">Аудио и видео</div>
<div class="arr" style="left:292px;top:251px"></div>
<div class="hl" style="left:54px;top:270px;width:252px;height:30px;background:#b1d6ec"></div>
<div class="t" style="left:58px;top:277px">Утилиты</div>
<div class="arr" style="left:292px;top:281px;border-left-color:#2a2e33"></div>
<div class="t" style="left:58px;top:307px">Игры</div>
<div class="arr" style="left:292px;top:311px"></div>
<div class="sep" style="left:58px;top:335px;width:244px;background:#c4c9ce"></div>
<div class="t" style="left:58px;top:348px">Установка и удаление программ</div>
<div class="t" style="left:58px;top:378px">Завершение работы</div>
<div class="arr" style="left:292px;top:382px"></div>

<!-- SUBMENU -->
<div class="a" style="left:310px;top:264px;width:264px;height:293px;background:linear-gradient(160deg,#e6eaee,#eef0f2);box-shadow:0 0 2px 1px rgba(0,0,0,.3)"></div>
<svg class="a" style="left:320px;top:277px" width="16" height="16">
<rect x="0.5" y="0.5" width="15" height="15" rx="1.2" fill="#e6e6e6" stroke="#9a9a9a"/>
<path d="M4.5 11.5 L11.5 4.5" stroke="#6a6a6a" stroke-width="1.8" stroke-linecap="round"/>
<path d="M3.2 4.6 A2.2 2.2 0 1 0 5.6 3 L5 4.8 L3.8 5.2Z" fill="#6a6a6a"/>
<path d="M4.2 3.8 L11.8 11.6" stroke="#6a6a6a" stroke-width="1.6" stroke-linecap="round"/>
<path d="M10.6 11.2 L12.6 13.2 L13.4 12.4 L11.4 10.4Z" fill="#505050"/>
</svg>
<div class="t" style="left:344px;top:277px">Системные</div>
<div class="arr" style="left:553px;top:281px"></div>
<div class="sep" style="left:320px;top:305px;width:244px;background:#c6cacf"></div>
<div class="hl" style="left:316px;top:311px;width:252px;height:30px;background:#b8dcee"></div>
<svg class="a" style="left:320px;top:319px" width="16" height="15">
<defs><linearGradient id="ark" x1="0" y1="0" x2="0" y2="1"><stop offset="0" stop-color="#d8b888"/><stop offset="1" stop-color="#b88e58"/></linearGradient></defs>
<rect x="0" y="0" width="16" height="15" fill="url(#ark)"/>
<rect x="0.4" y="0.4" width="15.2" height="4" fill="#ecd4a8" stroke="#c09a68" stroke-width=".6"/>
<path d="M8 0.4V4.4" stroke="#c09a68" stroke-width=".7"/>
<path d="M1 5.5 Q5 5 8 8 Q11 5 15 5.5" stroke="#f8f4ec" stroke-width="1.1" fill="none"/>
<ellipse cx="8" cy="11" rx="1.6" ry="2.4" fill="#fff" stroke="#9a8a78" stroke-width=".5"/>
</svg>
<div class="t" style="left:344px;top:318px">Ark</div>
<svg class="a" style="left:320px;top:348px" width="16" height="17">
<rect x="1" y="0.5" width="14" height="15.5" rx="1" fill="#f4f4f4" stroke="#3a3a3a"/>
<rect x="2.2" y="1.8" width="11.6" height="3.6" fill="#9ac870" stroke="#2a2a2a" stroke-width=".6"/>
<g fill="#4a4a4a"><rect x="2.5" y="7" width="2.4" height="1.6"/><rect x="5.6" y="7" width="2.4" height="1.6"/><rect x="8.7" y="7" width="2.4" height="1.6"/><rect x="2.5" y="9.8" width="2.4" height="1.6"/><rect x="5.6" y="9.8" width="2.4" height="1.6"/><rect x="8.7" y="9.8" width="2.4" height="1.6"/><rect x="2.5" y="12.6" width="2.4" height="1.6"/><rect x="5.6" y="12.6" width="2.4" height="1.6"/></g>
<rect x="11.6" y="11.8" width="2.4" height="2.6" fill="#f08a20"/>
</svg>
<div class="t" style="left:344px;top:348px">KCalc</div>
<svg class="a" style="left:320px;top:378px" width="16" height="16">
<circle cx="6" cy="6" r="4.5" fill="none" stroke="#3a3a3a" stroke-width="1.6"/>
<path d="M9.5 9.5L14.5 14.5" stroke="#3a3a3a" stroke-width="2.4" stroke-linecap="round"/>
</svg>
<div class="t" style="left:344px;top:378px">KFind</div>
<svg class="a" style="left:320px;top:409px" width="16" height="14">
<rect x="0.5" y="0.5" width="15" height="13" rx="1" fill="#262626" stroke="#9a9a9a"/>
<path d="M3.2 3.5L6.4 5.8L3.2 8.1" stroke="#fff" stroke-width="1.1" fill="none"/>
<path d="M6.8 9H11.2" stroke="#fff" stroke-width="1"/>
</svg>
<div class="t" style="left:344px;top:408px">Konsole</div>
<svg class="a" style="left:320px;top:437px" width="16" height="16">
<path d="M1.5 2.5 L12.5 1 L14.5 14 L3 15.5Z" fill="#f2f2f0" stroke="#c8c8c8" stroke-width=".7"/>
<path d="M3.5 5H10M3.8 7.5H10.5M4 10H9" stroke="#dcdcdc" stroke-width=".7"/>
<path d="M13 1 L5.2 12.6" stroke="#1a1a1a" stroke-width="1.6"/>
<path d="M5.2 12.6 L4.4 14.4 L6 13.2Z" fill="#d8a040"/>
</svg>
<div class="t" style="left:344px;top:438px">KWrite (root)</div>
<svg class="a" style="left:320px;top:467px" width="16" height="16">
<path d="M1.5 2.5 L12.5 1 L14.5 14 L3 15.5Z" fill="#f2f2f0" stroke="#c8c8c8" stroke-width=".7"/>
<path d="M3.5 5H10M3.8 7.5H10.5M4 10H9" stroke="#dcdcdc" stroke-width=".7"/>
<path d="M13 1 L5.2 12.6" stroke="#1a1a1a" stroke-width="1.6"/>
<path d="M5.2 12.6 L4.4 14.4 L6 13.2Z" fill="#d8a040"/>
</svg>
<div class="t" style="left:344px;top:468px">KWrite</div>
<svg class="a" style="left:320px;top:499px" width="17" height="15">
<defs><linearGradient id="spc" x1="0" y1="0" x2="1" y2="1"><stop offset="0" stop-color="#2a7ad0"/><stop offset=".6" stop-color="#8cc8f0"/><stop offset="1" stop-color="#4a9ae0"/></linearGradient></defs>
<rect x="0.5" y="0.5" width="14" height="10" fill="url(#spc)" stroke="#6a8aa8" stroke-width=".6"/>
<rect x="6" y="6" width="10.5" height="7" fill="#b8c4d0" stroke="#8a96a2" stroke-width=".6"/>
<rect x="7" y="7" width="5" height="5" fill="#5aa0e0"/>
<path d="M5 14H13" stroke="#a0a0a0" stroke-width="1.2"/>
</svg>
<div class="t" style="left:344px;top:498px">Spectacle</div>
<svg class="a" style="left:320px;top:528px" width="16" height="16">
<rect x="0" y="0" width="16" height="16" fill="#fafafa"/>
<circle cx="8.5" cy="8" r="6.5" fill="none" stroke="#d4d4d4" stroke-width="1.5"/>
<path d="M12.5 4 A5.5 5.5 0 0 0 3.5 8" stroke="#78c040" stroke-width="2.6" fill="none"/>
<path d="M0.5 7.5 H6.5 L3.5 12Z" fill="#5aa82a"/>
<rect x="8" y="8.5" width="7.5" height="7" fill="#3a8ad8"/>
<path d="M9.5 12H11.5M12.5 12H14.5" stroke="#d8ecfc" stroke-width="1.6"/>
</svg>
<div class="t" style="left:344px;top:528px">Установщик в режиме Live</div>

<!-- CURSOR -->
<svg class="a" style="left:334px;top:339px" width="14" height="20">
<path d="M1 1 L1 15.5 L4.5 12 L7.5 18 L9.5 17 L6.8 11 L11.5 11 Z" fill="#1a1a3a" stroke="#fff" stroke-width="1" stroke-linejoin="round"/>
</svg>

</body></html>
